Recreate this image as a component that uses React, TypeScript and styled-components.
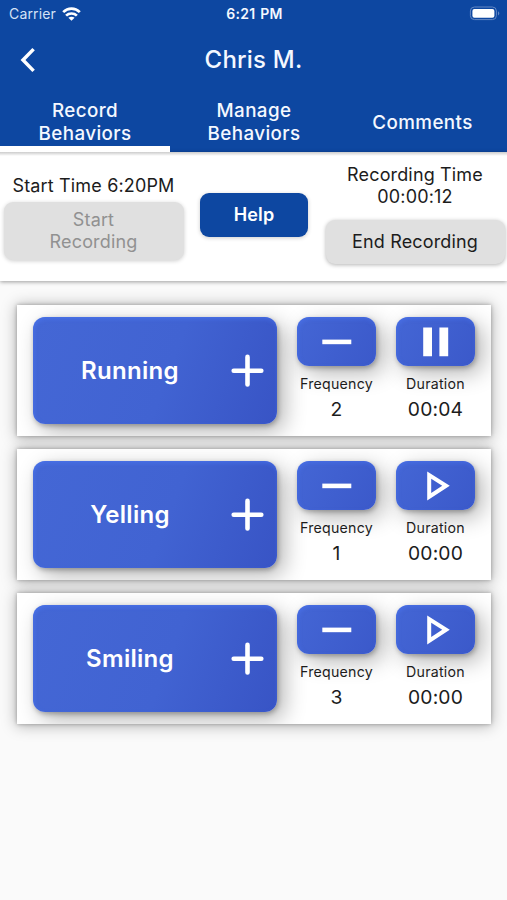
import React from 'react';
import styled, { createGlobalStyle } from 'styled-components';

const GlobalStyle = createGlobalStyle`
  * { box-sizing: border-box; }
  body { margin: 0; background: #fafafa; }
  button { font: inherit; border: 0; padding: 0; margin: 0; letter-spacing: inherit; }
`;

const Screen = styled.div`
  width: 507px;
  height: 900px;
  overflow: hidden;
  background: #fafafa;
  color: #1c1c1c;
  font-family: Inter, 'Liberation Sans', sans-serif;
`;

const Header = styled.header`
  height: 152px;
  background: #0d47a1;
  color: #f4f8ff;
`;

const StatusBar = styled.div`
  display: grid;
  grid-template-columns: 1fr auto 1fr;
  align-items: center;
  height: 27px;
  padding: 0 7px 0 9px;
`;

const Carrier = styled.div`
  display: flex;
  align-items: center;
  gap: 6px;
  font-size: 14px;
  letter-spacing: 0.15px;
  color: #d5e2f6;
`;

const Clock = styled.div`
  font-size: 14px;
  font-weight: 600;
  letter-spacing: 0.3px;
  word-spacing: 0.8px;
`;

const BatterySlot = styled.div`
  display: flex;
  justify-content: flex-end;
`;

const TitleBar = styled.div`
  display: grid;
  grid-template-columns: 60px 1fr 60px;
  align-items: center;
  height: 64px;
`;

const BackButton = styled.button`
  display: flex;
  padding: 1px 0 0 19px;
  background: none;
  color: inherit;
`;

const Title = styled.h1`
  margin: 0;
  text-align: center;
  font-size: 24px;
  font-weight: 500;
  letter-spacing: 0.2px;
`;

const Tabs = styled.nav`
  display: grid;
  grid-template-columns: 170px 168px 169px;
  height: 61px;
`;

const Tab = styled.button<{ $active?: boolean }>`
  display: flex;
  align-items: center;
  justify-content: center;
  padding-top: 1px;
  background: none;
  color: inherit;
  font-size: 18.8px;
  font-weight: 500;
  line-height: 23px;
  letter-spacing: 0.4px;
  text-align: center;
  box-shadow: ${(p) => (p.$active ? 'inset 0 -6px #fff' : 'none')};
`;

const Controls = styled.section`
  display: grid;
  grid-template-columns: 187px 134px 186px;
  height: 129px;
  background: linear-gradient(rgba(0, 0, 0, 0.2), rgba(0, 0, 0, 0) 4px) #fff;
  box-shadow: 0 1px 4px rgba(0, 0, 0, 0.38);
`;

const ControlColumn = styled.div<{ $top: number; $gap: number; $shift?: number }>`
  display: flex;
  flex-direction: column;
  align-items: center;
  gap: ${(p) => p.$gap}px;
  padding-top: ${(p) => p.$top}px;
  padding-left: ${(p) => p.$shift ?? 0}px;
`;

const TimeText = styled.div`
  font-size: 18px;
  line-height: 22px;
  letter-spacing: 0.15px;
  text-align: center;
`;

const ControlButton = styled.button<{ $w: number; $h: number; $tone?: 'muted' | 'primary' }>`
  width: ${(p) => p.$w}px;
  height: ${(p) => p.$h}px;
  border-radius: 9px;
  background: ${(p) => (p.$tone === 'primary' ? '#0d47a1' : '#e0e0e0')};
  color: ${(p) => (p.$tone === 'primary' ? '#fff' : p.$tone === 'muted' ? '#919191' : '#1c1c1c')};
  font-size: 18px;
  font-weight: ${(p) => (p.$tone === 'primary' ? 600 : 400)};
  line-height: 22px;
  letter-spacing: 0.15px;
  box-shadow: 0 1px 4px rgba(0, 0, 0, ${(p) => (p.$tone ? 0.2 : 0.3)});
`;

const CardList = styled.main`
  display: flex;
  flex-direction: column;
  gap: 13px;
  padding: 24px 16px 0 17px;
`;

const CardShadow = styled.div`
  box-shadow: 0 0 4px rgba(0, 0, 0, 0.3), 0 1px 14px 1px rgba(0, 0, 0, 0.28);
`;

const Card = styled.article`
  position: relative;
  display: grid;
  grid-template-columns: 244px 79px 79px;
  column-gap: 20px;
  height: 131px;
  padding: 12.4px 0 0 16px;
  background: #fff;
  overflow: hidden;
`;

const CountButton = styled.button`
  display: grid;
  grid-template-columns: 1fr 33px;
  align-items: center;
  height: 107px;
  padding: 0 13.5px 0 0;
  border-radius: 12px;
  background: linear-gradient(110deg, #4467d5 0%, #4163d2 55%, #3854c5 100%);
  color: #fff;
  font-size: 24px;
  font-weight: 600;
  letter-spacing: 0.3px;
  box-shadow: inset 1px 2px 4px rgba(75, 120, 245, 0.6), 1px 2px 5px rgba(0, 0, 0, 0.28),
    7px 7px 22px rgba(0, 0, 0, 0.3);
`;

const ButtonText = styled.span`
  margin-right: 3.5px;
`;

const Metric = styled.div`
  display: flex;
  flex-direction: column;
  align-items: center;
`;

const MetricButton = styled.button`
  display: flex;
  align-items: center;
  justify-content: center;
  width: 79px;
  height: 49px;
  border-radius: 12px;
  background: linear-gradient(120deg, #4466d5, #3b59ca);
  color: #fff;
  box-shadow: inset 1px 2px 4px rgba(75, 120, 245, 0.5), 1px 2px 5px rgba(0, 0, 0, 0.28),
    7px 7px 22px rgba(0, 0, 0, 0.3);
`;

const MetricLabel = styled.div`
  margin-top: 9px;
  font-size: 14.2px;
  line-height: 18px;
  letter-spacing: 0.25px;
`;

const MetricValue = styled.div`
  margin-top: 4px;
  font-size: 19.3px;
  line-height: 24px;
  letter-spacing: 0.15px;
`;

const WifiIcon = () => (
  <svg width="19" height="14" viewBox="0 0 19 14" fill="none" stroke="#fff" strokeWidth="2.7">
    <path d="M1.2 5.1C5.9.4 13.1.4 17.8 5.1" />
    <path d="M4.1 8.6c2.9-2.8 7.9-2.8 10.8 0" />
    <path d="M6.4 10.8c1.7-1.5 4.5-1.5 6.2 0L9.5 13.8z" fill="#fff" stroke="none" />
  </svg>
);

const BatteryIcon = () => (
  <svg width="31" height="15" viewBox="0 0 31 15">
    <rect x="1.4" y="1" width="26" height="12.6" rx="4" fill="none" stroke="#6488c4" />
    <rect x="3.4" y="2.9" width="22" height="8.9" rx="2" fill="#fff" />
    <path d="M29 5.2c1.8.8 1.8 3.4 0 4.2z" fill="#6488c4" />
  </svg>
);

const BackIcon = () => (
  <svg width="18" height="26" viewBox="0 0 18 26" fill="none" stroke="#fff" strokeWidth="3.5">
    <path d="M14.6 2.1 4 13l10.6 10.9" />
  </svg>
);

const PlusIcon = () => (
  <svg width="33" height="33" viewBox="0 0 33 33" stroke="#fff" strokeWidth="4.6" strokeLinecap="round">
    <path d="M16.5 2.9v27.6M2.7 16.7h27.6" />
  </svg>
);

const MinusIcon = () => (
  <svg width="30" height="30" viewBox="0 0 30 30" fill="#fff">
    <path d="M.3 12.6h29v4.6H.3z" />
  </svg>
);

const PauseIcon = () => (
  <svg width="30" height="30" viewBox="0 0 30 30" fill="#fff">
    <path d="M2.2.5H11v28.8H2.2zM18.4.5h8.8v28.8h-8.8z" />
  </svg>
);

const PlayIcon = () => (
  <svg width="30" height="30" viewBox="0 0 30 30" fill="#fff" fillRule="evenodd">
    <path d="M6.2.4 28.8 14.8 6.2 29.4zM10.2 7.8v14.2L21.2 14.8z" />
  </svg>
);

const behaviors = [
  { name: 'Running', frequency: 2, duration: '00:04', running: true },
  { name: 'Yelling', frequency: 1, duration: '00:00', running: false },
  { name: 'Smiling', frequency: 3, duration: '00:00', running: false },
];

export default function App() {
  return (
    <Screen>
      <GlobalStyle />
      <Header>
        <StatusBar>
          <Carrier>
            Carrier
            <WifiIcon />
          </Carrier>
          <Clock>6:21 PM</Clock>
          <BatterySlot>
            <BatteryIcon />
          </BatterySlot>
        </StatusBar>
        <TitleBar>
          <BackButton aria-label="Back">
            <BackIcon />
          </BackButton>
          <Title>Chris M.</Title>
        </TitleBar>
        <Tabs>
          <Tab $active>
            Record
            <br />
            Behaviors
          </Tab>
          <Tab>
            Manage
            <br />
            Behaviors
          </Tab>
          <Tab>Comments</Tab>
        </Tabs>
      </Header>
      <Controls>
        <ControlColumn $top={23} $gap={5}>
          <TimeText>Start Time 6:20PM</TimeText>
          <ControlButton $w={180} $h={58} $tone="muted" disabled>
            Start
            <br />
            Recording
          </ControlButton>
        </ControlColumn>
        <ControlColumn $top={41} $gap={0}>
          <ControlButton $w={108} $h={44} $tone="primary">
            Help
          </ControlButton>
        </ControlColumn>
        <ControlColumn $top={12} $gap={12} $shift={2}>
          <TimeText>
            Recording Time
            <br />
            00:00:12
          </TimeText>
          <ControlButton $w={179} $h={44}>
            End Recording
          </ControlButton>
        </ControlColumn>
      </Controls>
      <CardList>
        {behaviors.map((b) => (
          <CardShadow key={b.name}>
            <Card>
              <CountButton>
                <ButtonText>{b.name}</ButtonText>
                <PlusIcon />
              </CountButton>
              <Metric>
                <MetricButton aria-label="Decrease">
                  <MinusIcon />
                </MetricButton>
                <MetricLabel>Frequency</MetricLabel>
                <MetricValue>{b.frequency}</MetricValue>
              </Metric>
              <Metric>
                <MetricButton aria-label={b.running ? 'Pause' : 'Play'}>
                  {b.running ? <PauseIcon /> : <PlayIcon />}
                </MetricButton>
                <MetricLabel>Duration</MetricLabel>
                <MetricValue>{b.duration}</MetricValue>
              </Metric>
            </Card>
          </CardShadow>
        ))}
      </CardList>
    </Screen>
  );
}
